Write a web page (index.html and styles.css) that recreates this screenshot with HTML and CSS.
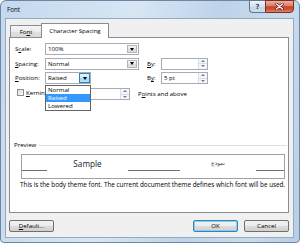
FILE: index.html
```html
<!DOCTYPE html>
<html>
<head>
<meta charset="utf-8">
<link rel="stylesheet" href="styles.css">
</head>
<body>
<div class="window">
  <div class="titlebar">
    <span class="title">Font</span>
    <div class="caption-btns">
      <div class="cbtn help">?</div>
      <div class="cbtn close">
        <svg width="9" height="7" viewBox="0 0 9 7"><path d="M1.5 1 L7.5 6 M7.5 1 L1.5 6" stroke="#5a1a10" stroke-width="2.6" stroke-linecap="round"/><path d="M1.5 1 L7.5 6 M7.5 1 L1.5 6" stroke="#fff" stroke-width="1.4" stroke-linecap="round"/></svg>
      </div>
    </div>
  </div>
  <div class="client">
    <div class="tabs">
      <div class="tab">Fo<u>n</u>t</div>
      <div class="tab active">Character Spacing</div>
    </div>
    <div class="panel">
      <div class="form">
        <span class="lbl">S<u>c</u>ale:</span>
        <div class="combo"><span class="val">100%</span><span class="drop"><i class="tri"></i></span></div>
        <span></span><span></span>

        <span class="lbl"><u>S</u>pacing:</span>
        <div class="combo"><span class="val">Normal</span><span class="drop"><i class="tri"></i></span></div>
        <span class="lbl by"><u>B</u>y:</span>
        <div class="spin"><span class="val"></span><span class="spinbtns"><i class="up"></i><i class="down"></i></span></div>

        <span class="lbl"><u>P</u>osition:</span>
        <div class="combo short">
          <span class="val">Raised</span><span class="drop hot"><i class="tri"></i></span>
          <ul class="droplist">
            <li>Normal</li>
            <li class="sel">Raised</li>
            <li>Lowered</li>
          </ul>
        </div>
        <span class="lbl by">B<u>y</u>:</span>
        <div class="spin"><span class="val">5 pt</span><span class="spinbtns"><i class="up"></i><i class="down"></i></span></div>
      </div>
      <div class="kern">
        <span class="check"></span>
        <span class="klabel"><u>K</u>erning for fonts:</span>
        <div class="spin kspin"><span class="val"></span><span class="spinbtns"><i class="up"></i><i class="down"></i></span></div>
        <span class="points">P<u>o</u>ints and above</span>
      </div>

      <div class="group-head"><span>Preview</span><span class="rule"></span></div>
      <div class="preview">
        <span class="seg s1"></span>
        <span class="ptext latin">Sample</span>
        <span class="seg s2"></span>
        <span class="ptext arabic" dir="rtl">نموذج</span>
        <span class="seg s3"></span>
      </div>
      <p class="desc">This is the body theme font. The current document theme defines which font will be used.</p>
    </div>
    <div class="buttons">
      <div class="btn"><u>D</u>efault...</div>
      <div class="spacer"></div>
      <div class="btn default">OK</div>
      <div class="btn">Cancel</div>
    </div>
  </div>
</div>
</body>
</html>
```

FILE: styles.css
```css
* { box-sizing: border-box; margin: 0; padding: 0; }
html, body { width: 300px; height: 243px; overflow: hidden; background: #fff; }
body {
  font-family: "Open Sans", "Noto Sans", sans-serif;
  font-size: 6.1px;
  line-height: 8px;
  color: #000;
}
u { text-decoration: underline; text-underline-offset: 1px; }

.window {
  width: 300px;
  height: 243px;
  display: flex;
  flex-direction: column;
  padding: 0 5px 4px 4px;
  border: 1px solid #6d86a3;
  border-radius: 6px 6px 4px 4px;
  background: linear-gradient(100deg, #c4d8ee 0%, #d8e6f4 40%, #bed3ea 65%, #c9dbee 85%, #b8cde5 100%);
}

.titlebar {
  height: 17px;
  flex: none;
  display: flex;
  align-items: flex-start;
}
.title {
  padding: 5px 0 0 2px;
  font-size: 6.2px;
  color: #000;
}
.caption-btns {
  margin-left: auto;
  margin-top: -1px;
  display: flex;
}
.cbtn {
  height: 13px;
  display: flex;
  align-items: center;
  justify-content: center;
  border: 1px solid #5f7590;
}
.help {
  width: 16px;
  border-right: none;
  border-radius: 0 0 0 4px;
  background: linear-gradient(#eef3f9, #d7e2ee 50%, #c3d3e6 51%, #cfdcec);
  color: #34465d;
  font-family: "DejaVu Sans", sans-serif;
  font-size: 7px;
  font-weight: bold;
}
.close {
  width: 29px;
  border-color: #7a2d22;
  border-radius: 0 0 4px 0;
  background: linear-gradient(#eeb0a3, #dd7b66 45%, #c7432a 52%, #d0583c 80%, #e08a6c);
}

.client {
  flex: 1;
  display: flex;
  flex-direction: column;
  border: 1px solid #93a8c1;
  background: #f0f0f0;
  padding: 4px 4px 0 3px;
}

.tabs {
  height: 14px;
  flex: none;
  display: flex;
  align-items: flex-end;
  padding-left: 1px;
  position: relative;
  z-index: 2;
}
.tab {
  height: 12px;
  border: 1px solid #898c95;
  border-bottom: none;
  display: flex;
  align-items: center;
  justify-content: center;
  width: 32px;
  background: linear-gradient(#f5f5f5, #ececec 50%, #e0e0e0 51%, #d9d9d9);
  border-radius: 1px 1px 0 0;
}
.tab.active {
  width: 68px;
  height: 15px;
  margin-bottom: -1px;
  margin-left: -1px;
  background: #fff;
  padding-bottom: 1px;
}

.panel {
  height: 176px;
  flex: none;
  border: 1px solid #898c95;
  background: #fff;
  display: flex;
  flex-direction: column;
}

.form {
  display: grid;
  grid-template-columns: 30px 94px 22px 47px;
  grid-template-rows: 12px 12px 12px;
  row-gap: 2.5px;
  padding: 5px 0 0 5px;
  align-items: center;
}
.lbl { white-space: nowrap; }
.by { padding-left: 8px; }

.combo {
  position: relative;
  height: 12px;
  border: 1px solid #a5acb5;
  background: #fff;
  display: flex;
  align-items: stretch;
}
.combo.short { width: 46px; }
.val {
  flex: 1;
  padding-left: 2px;
  display: flex;
  align-items: center;
  white-space: nowrap;
}
.drop {
  width: 10px;
  margin: 1px;
  border: 1px solid #b4b4b4;
  background: linear-gradient(#f6f6f6, #e6e6e6 50%, #d9d9d9 51%, #e3e3e3);
  display: flex;
  align-items: center;
  justify-content: center;
}
.drop.hot {
  margin: 0;
  width: 11px;
  border-color: #3c7fb1;
  background: linear-gradient(#e3f4fc, #c4e6f8 50%, #a4d6f3 51%, #b6e0f7);
}
.tri {
  width: 0;
  height: 0;
  border-left: 2.5px solid transparent;
  border-right: 2.5px solid transparent;
  border-top: 3px solid #000;
}

.droplist {
  position: absolute;
  left: -1px;
  top: 12px;
  width: 46px;
  border: 1px solid #646464;
  background: #fff;
  list-style: none;
  z-index: 5;
}
.droplist li {
  height: 8px;
  line-height: 8px;
  padding-left: 2px;
}
.droplist li.sel {
  background: #3399ff;
  color: #fff;
}

.spin {
  height: 12px;
  width: 47px;
  border: 1px solid #a5acb5;
  background: #fff;
  display: flex;
}
.spinbtns {
  width: 9px;
  display: flex;
  flex-direction: column;
  border-left: 1px solid #d6dde6;
  background: #f4f6f9;
}
.spinbtns i {
  flex: 1;
  display: flex;
  align-items: center;
  justify-content: center;
}
.spinbtns .up { border-bottom: 1px solid #d6dde6; }
.spinbtns .up::after {
  content: "";
  border-left: 2px solid transparent;
  border-right: 2px solid transparent;
  border-bottom: 2px solid #6a7d95;
}
.spinbtns .down::after {
  content: "";
  border-left: 2px solid transparent;
  border-right: 2px solid transparent;
  border-top: 2px solid #6a7d95;
}

.kern {
  display: flex;
  align-items: flex-start;
  margin-top: 4px;
  padding-left: 5px;
  height: 12px;
}
.check {
  width: 7px;
  height: 7px;
  margin: 1px 0 0 2px;
  border: 1px solid #8e8f8f;
  background: linear-gradient(135deg, #dcdcdc, #fbfbfb);
}
.klabel {
  width: 19px;
  margin: 0 41px 0 2px;
  overflow: hidden;
  white-space: nowrap;
  line-height: 9px;
  height: 9px;
}
.kspin { width: 44px; }
.points {
  margin-left: 8px;
  line-height: 12px;
  white-space: nowrap;
}

.group-head {
  margin-top: 41px;
  padding-left: 4px;
  padding-right: 1px;
  height: 8px;
  display: flex;
  align-items: center;
  gap: 3px;
}
.rule {
  flex: 1;
  border-top: 1px solid #d5dfe5;
}

.preview {
  margin: 5px 3px 0 11px;
  height: 25px;
  border: 1px solid #a0a0a0;
  display: flex;
  align-items: flex-start;
}
.seg {
  height: 16px;
  border-bottom: 1px solid #6e6e6e;
}
.s1 { width: 25px; }
.s2 { width: 52px; }
.s3 { flex: 1; }
.ptext {
  height: 16px;
  display: flex;
  align-items: center;
  justify-content: center;
}
.latin {
  width: 81px;
  font-size: 8.2px;
  padding-top: 1px;
  color: #222;
}
.arabic {
  width: 76px;
  font-family: "DejaVu Sans", sans-serif;
  font-size: 5.6px;
  color: #333;
}

.desc {
  margin-top: 2px;
  padding-left: 10px;
  height: 8px;
  font-size: 6.35px;
  white-space: nowrap;
}

.buttons {
  display: flex;
  margin-top: 7px;
  gap: 6px;
}
.spacer { flex: 1; }
.btn {
  width: 45px;
  height: 12px;
  border: 1px solid #707070;
  border-radius: 2px;
  background: linear-gradient(#f2f2f2, #ebebeb 50%, #dddddd 51%, #cfcfcf);
  display: flex;
  align-items: center;
  justify-content: center;
}
.btn.default {
  border-color: #3c7fb1;
  box-shadow: inset 0 0 0 1px #7ad0f6;
}
```
